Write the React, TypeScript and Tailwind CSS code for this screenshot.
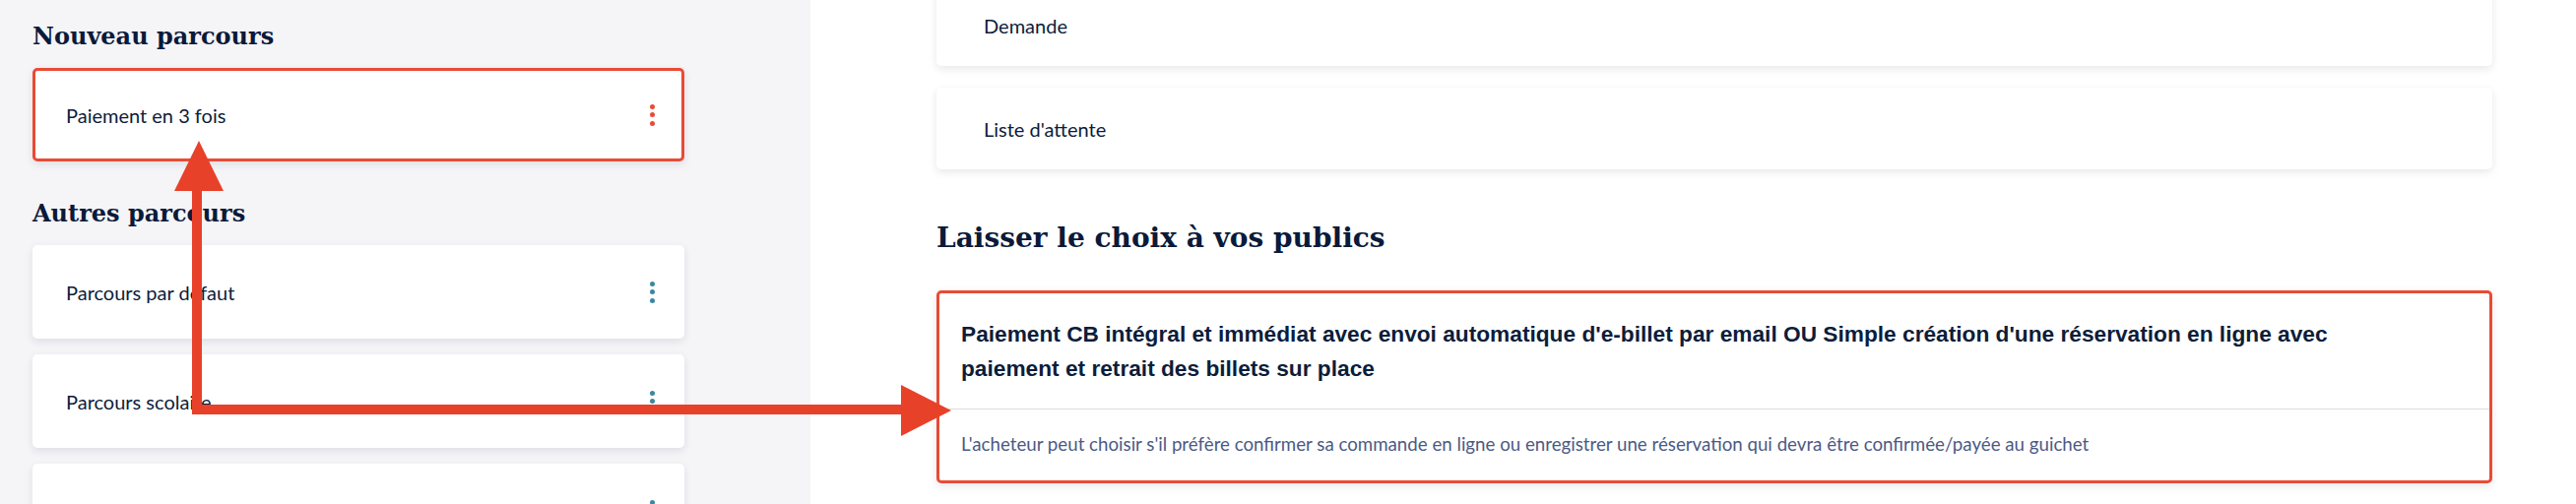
import React from "react";

const serif = "font-['DejaVu_Serif',serif]";
const sans = "font-['Lato','Liberation_Sans',sans-serif]";
const sansBold = "font-['Liberation_Sans','Arial',sans-serif]";

function Dots({ color }: { color: string }) {
  return (
    <div className="flex flex-col gap-[3.5px]">
      <span className={`block w-[5px] h-[5px] rounded-full ${color}`} />
      <span className={`block w-[5px] h-[5px] rounded-full ${color}`} />
      <span className={`block w-[5px] h-[5px] rounded-full ${color}`} />
    </div>
  );
}

function PathCard({ label, selected }: { label: string; selected?: boolean }) {
  return (
    <div
      className={`h-[95px] w-[662px] shrink-0 rounded-[5px] border-[3px] bg-white flex items-center justify-between pl-[31px] pr-[27px] shadow-[0_3px_8px_rgba(30,30,70,0.10)] ${
        selected ? "border-[#e94b35]" : "border-white"
      }`}
    >
      <span className={`${sans} text-[20px] leading-[28px] text-[#0c1d3b]`}>{label}</span>
      <Dots color={selected ? "bg-[#e94b35]" : "bg-[#3a87a0]"} />
    </div>
  );
}

function ModeCard({ label, className = "" }: { label: string; className?: string }) {
  return (
    <div
      className={`h-[82px] rounded-[5px] bg-white flex items-center px-[48px] shadow-[0_3px_8px_rgba(30,30,70,0.10)] ${className}`}
    >
      <span className={`${sans} text-[20px] leading-[28px] text-[#0c1d3b]`}>{label}</span>
    </div>
  );
}

export default function App() {
  return (
    <div className="relative w-[2616px] h-[512px] overflow-hidden flex bg-white">
      <aside className="w-[823px] shrink-0 bg-[#f5f4f7] pl-[33px] pt-[21px] flex flex-col">
        <h2 className={`${serif} font-bold text-[24px] leading-[32px] text-[#0a1a3a] mb-[16px]`}>
          Nouveau parcours
        </h2>
        <PathCard label="Paiement en 3 fois" selected />
        <h2 className={`${serif} font-bold text-[24px] leading-[32px] text-[#0a1a3a] mt-[37px] mb-[16px]`}>
          Autres parcours
        </h2>
        <div className="flex flex-col gap-[16px]">
          <PathCard label="Parcours par défaut" />
          <PathCard label="Parcours scolaire" />
          <PathCard label="Parcours abonnés" />
        </div>
      </aside>

      <main className="flex-1 pl-[128px] pr-[85px] flex flex-col">
        <ModeCard label="Demande" className="-mt-[15px]" />
        <ModeCard label="Liste d'attente" className="mt-[22px] h-[83px]" />
        <h2 className={`${serif} font-bold text-[28px] leading-[40px] text-[#0a1a3a] mt-[50px] mb-[33px]`}>
          Laisser le choix à vos publics
        </h2>
        <div className="rounded-[5px] border-[3px] border-[#e94b35] bg-white shadow-[0_3px_8px_rgba(30,30,70,0.10)]">
          <div className="px-[22px] pt-[24px] pb-[23px] border-b border-[#dcdcdc]">
            <p className={`${sansBold} font-bold text-[22.7px] leading-[35px] text-[#0c1d3b] whitespace-nowrap`}>
              Paiement CB intégral et immédiat avec envoi automatique d'e-billet par email OU Simple création d'une réservation en ligne avec
              <br />
              paiement et retrait des billets sur place
            </p>
          </div>
          <div className="px-[22px] pt-[22px] pb-[23px]">
            <p className={`${sans} text-[18.7px] leading-[27px] text-[#4b5a85]`}>
              L'acheteur peut choisir s'il préfère confirmer sa commande en ligne ou enregistrer une réservation qui devra être confirmée/payée au guichet
            </p>
          </div>
        </div>
      </main>

      <svg
        className="absolute inset-0 pointer-events-none"
        width="2616"
        height="512"
        viewBox="0 0 2616 512"
      >
        <polyline
          points="200,192 200,416 918,416"
          fill="none"
          stroke="#e8412a"
          strokeWidth="10"
          strokeLinejoin="miter"
        />
        <polygon points="202,143 177,194 227,194" fill="#e8412a" />
        <polygon points="966,417 915,391 915,443" fill="#e8412a" />
      </svg>
    </div>
  );
}
